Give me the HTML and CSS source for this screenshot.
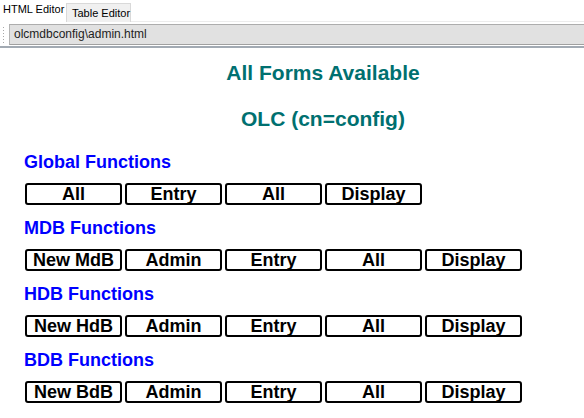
FILE: index.html
```html
<!DOCTYPE html>
<html>
<head>
<meta charset="utf-8">
<title>admin</title>
<link rel="stylesheet" href="styles.css">
</head>
<body>
<div class="tabs">
  <div class="tab active">HTML Editor</div>
  <div class="tab">Table Editor</div>
  <div class="tab-fill"></div>
</div>
<div class="addr">
  <div class="grip"></div>
  <div class="field">olcmdbconfig\admin.html</div>
</div>
<div class="sep"></div>
<div class="page">
  <h1 class="title">All Forms Available</h1>
  <h1 class="title second">OLC (cn=config)</h1>

  <section class="group">
    <h2 class="group-title">Global Functions</h2>
    <div class="row">
      <button class="btn">All</button>
      <button class="btn">Entry</button>
      <button class="btn">All</button>
      <button class="btn">Display</button>
    </div>
  </section>

  <section class="group">
    <h2 class="group-title">MDB Functions</h2>
    <div class="row">
      <button class="btn">New MdB</button>
      <button class="btn">Admin</button>
      <button class="btn">Entry</button>
      <button class="btn">All</button>
      <button class="btn">Display</button>
    </div>
  </section>

  <section class="group">
    <h2 class="group-title">HDB Functions</h2>
    <div class="row">
      <button class="btn">New HdB</button>
      <button class="btn">Admin</button>
      <button class="btn">Entry</button>
      <button class="btn">All</button>
      <button class="btn">Display</button>
    </div>
  </section>

  <section class="group">
    <h2 class="group-title">BDB Functions</h2>
    <div class="row">
      <button class="btn">New BdB</button>
      <button class="btn">Admin</button>
      <button class="btn">Entry</button>
      <button class="btn">All</button>
      <button class="btn">Display</button>
    </div>
  </section>
</div>
</body>
</html>
```

FILE: styles.css
```css
html, body {
  margin: 0;
  padding: 0;
  background: #ffffff;
  overflow: hidden;
  font-family: "Liberation Sans", Arial, sans-serif;
}

.tabs {
  display: flex;
  height: 21px;
  border-bottom: 1px solid #ececec;
  box-sizing: content-box;
}

.tab {
  font-size: 11px;
  color: #000;
  white-space: nowrap;
  box-sizing: border-box;
}

.tab.active {
  width: 66px;
  height: 22px;
  padding: 3px 0 0 3px;
  background: #fff;
  position: relative;
  z-index: 1;
}

.tab:not(.active) {
  width: 65px;
  height: 19px;
  margin-top: 3px;
  padding: 3px 0 0 5px;
  background: #f0f0f0;
  border: 1px solid #d9d9d9;
  border-bottom: none;
}

.tab-fill {
  flex: 1;
}

.addr {
  display: flex;
  align-items: stretch;
  margin-top: 2px;
  height: 21px;
}

.grip {
  width: 3px;
  margin: 2px 4px 0 2px;
  background-image: radial-gradient(circle, #a8a8a8 0.8px, transparent 1px);
  background-size: 3px 3px;
}

.field {
  flex: 1;
  box-sizing: border-box;
  background: #e1e1e1;
  border-top: 1px solid #adadad;
  border-bottom: 1px solid #a0a0a0;
  border-left: 1px solid #b4b4b4;
  font-size: 12px;
  line-height: 19px;
  padding-left: 4px;
  color: #1e1e1e;
}

.sep {
  height: 2px;
  margin-top: 1px;
  background: #a2aab3;
}

.page {
  padding-top: 13px;
}

.title {
  margin: 0;
  padding-left: 62px;
  text-align: center;
  font-size: 21px;
  line-height: 24px;
  font-weight: bold;
  color: #007070;
}

.title.second {
  margin-top: 22px;
}

.group {
  padding-left: 25px;
}

.group:first-of-type {
  margin-top: 20px;
}

.group + .group {
  margin-top: 12px;
}

.group-title {
  margin: 0 0 10px -1px;
  font-size: 18px;
  line-height: 22px;
  font-weight: bold;
  color: #0000ff;
}

.row {
  display: flex;
  gap: 3px;
}

.btn {
  width: 97px;
  height: 22px;
  box-sizing: border-box;
  margin: 0;
  padding: 0;
  border: 2px solid #000;
  border-radius: 3px;
  background: #fff;
  color: #000;
  font-family: "Liberation Sans", Arial, sans-serif;
  font-size: 18px;
  font-weight: bold;
  line-height: 17px;
  overflow: hidden;
  text-align: center;
  white-space: nowrap;
}
```
